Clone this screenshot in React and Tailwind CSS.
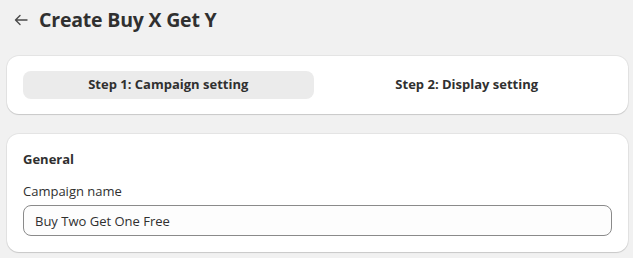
import React, { useState } from 'react';

const FONT = { fontFamily: '"Open Sans", "Noto Sans", sans-serif' };

const steps = ['Step 1: Campaign setting', 'Step 2: Display setting'];

const App = () => {
  const [active, setActive] = useState(0);
  const [name, setName] = useState('Buy Two Get One Free');

  return (
    <div className="min-h-screen bg-[#f1f1f1] text-[#303030] pl-[7px] pr-[5px] pt-[6px]" style={FONT}>
      {/* Header */}
      <div className="flex items-center h-[28px] mb-[22px]">
        <button className="w-[32px] flex items-center justify-start pl-[7px] text-[#4a4a4a]">
          <svg width="14" height="12" viewBox="0 0 14 12" fill="none" stroke="currentColor" strokeWidth="1.4" strokeLinecap="round" strokeLinejoin="round">
            <path d="M13 6H1.5M6 1.5 1.5 6 6 10.5" />
          </svg>
        </button>
        <h1 className="text-[19.5px] font-bold tracking-[-0.2px]">Create Buy X Get Y</h1>
      </div>

      {/* Steps */}
      <div className="bg-white rounded-[12px] shadow-[0_1px_1px_rgba(0,0,0,0.12),0_0_0_1px_rgba(0,0,0,0.05)] px-4 py-[15px] mb-[20px]">
        <div className="grid grid-cols-2 gap-2">
          {steps.map((s, i) => (
            <button
              key={s}
              onClick={() => setActive(i)}
              className={`h-[28px] rounded-[8px] text-[13px] font-bold ${active === i ? 'bg-[#ebebeb]' : ''}`}
            >
              {s}
            </button>
          ))}
        </div>
      </div>

      {/* General */}
      <div className="bg-white rounded-[12px] shadow-[0_1px_1px_rgba(0,0,0,0.12),0_0_0_1px_rgba(0,0,0,0.05)] px-4 pt-[15px] pb-[16px]">
        <h2 className="text-[13px] font-bold leading-[20px] mb-[14px]">General</h2>
        <label className="block text-[13px] leading-[16px] mb-[6px]">Campaign name</label>
        <input
          value={name}
          onChange={(e) => setName(e.target.value)}
          className="block w-full h-[31px] rounded-[8px] border border-[#8a8a8a] bg-[#fdfdfd] px-[11px] text-[13px] outline-none"
          style={FONT}
        />
      </div>
    </div>
  );
};

export default App;
